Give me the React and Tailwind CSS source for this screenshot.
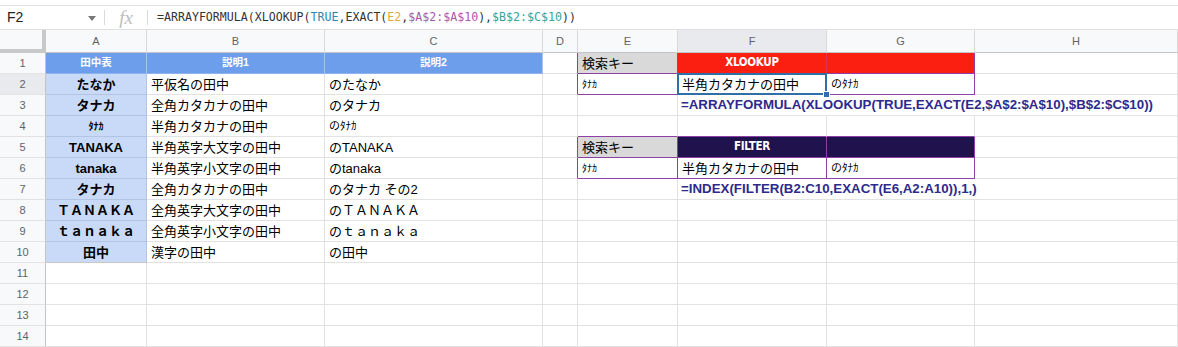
import React from "react";
import { twMerge } from "tailwind-merge";

const GRID = "grid grid-cols-[46px_101px_178px_218px_35px_100px_149px_148px_203px]";
const P = "border-[#8e3fa8]";

function C({ className = "", children }) {
  return (
    <div
      className={twMerge(
        "h-[21px] border-r border-b border-[#e2e2e2] flex items-center px-[4px] whitespace-nowrap text-[13px] text-black leading-none",
        className
      )}
    >
      {children}
    </div>
  );
}

function RH({ n, sel }) {
  return (
    <div
      className={twMerge(
        "h-[21px] border-r border-b border-r-[#c4c4c4] border-b-[#e2e2e2] bg-[#f8f9fa] flex items-center justify-center text-[11px] text-[#5f6368]",
        sel ? "bg-[#e8eaed]" : ""
      )}
    >
      {n}
    </div>
  );
}

const A = "bg-[#c9daf8] font-bold justify-center border-r-[#b3c4e2] border-b-[#b3c4e2]";
const HEAD = "bg-[#6d9eeb] text-white font-bold text-[10.5px] justify-center border-r-[#a9c4f1] border-b-[#8fb3ee]";
const FORMULA = "col-span-3 font-bold text-[13.3px] text-[#2e2a8c] border-r-[#e2e2e2] pl-[3px]";
const COND = "[font-family:'DejaVu_Sans_Condensed','DejaVu_Sans',sans-serif] font-bold text-[11.5px] text-white justify-center tracking-[-0.3px]";

export default function App() {
  return (
    <div className="w-[1178px] h-[347px] overflow-hidden bg-white [font-family:'Liberation_Sans','Noto_Sans_CJK_JP',sans-serif]">
      {/* formula bar */}
      <div className="mt-[5px] h-[25px] border-t border-b border-[#e0e0e0] flex items-center">
        <div className="w-[104px] h-full flex items-center justify-between pl-[7px] pr-[8px]">
          <span className="text-[14px] text-[#222]">F2</span>
          <svg width="8" height="5" viewBox="0 0 8 5" className="mt-[2px]">
            <path d="M0 0 L8 0 L4 5 Z" fill="#777" />
          </svg>
        </div>
        <div className="w-px h-[15px] bg-[#dadada]" />
        <div className="w-[42px] flex items-center justify-center">
          <span className="[font-family:'Liberation_Serif',serif] italic text-[19px] text-[#bdbdbd] leading-none">fx</span>
        </div>
        <div className="w-px h-[15px] bg-[#dadada]" />
        <div className="pl-[9px] [font-family:'DejaVu_Sans_Mono',monospace] text-[11.6px] text-[#333] whitespace-nowrap">
          =ARRAYFORMULA(XLOOKUP(<span className="text-[#2f86b4]">TRUE</span>,EXACT(
          <span className="text-[#e0a74a]">E2</span>,<span className="text-[#a957a8]">$A$2:$A$10</span>),
          <span className="text-[#32a59a]">$B$2:$C$10</span>))
        </div>
      </div>

      {/* column headers */}
      <div className={GRID}>
        <div className="h-[23px] bg-[#f8f9fa] border-r-[4px] border-b-[4px] border-[#c8c8c8]" />
        {["A", "B", "C", "D", "E", "F", "G", "H"].map((l) => (
          <div
            key={l}
            className={twMerge(
              "h-[23px] bg-[#f8f9fa] border-r border-b border-r-[#d9d9d9] border-b-[#c4c4c4] flex items-center justify-center text-[11px] text-[#5f6368]",
              l === "F" ? "bg-[#e8eaed]" : ""
            )}
          >
            {l}
          </div>
        ))}
      </div>

      {/* rows */}
      <div className={GRID}>
        {/* 1 */}
        <RH n={1} />
        <C className={HEAD}>田中表</C>
        <C className={HEAD}>説明1</C>
        <C className={HEAD}>説明2</C>
        <C className={`border-r-[#8e3fa8]`} />
        <C className={`bg-[#d9d9d9] ${P}`}>検索キー</C>
        <C className={`bg-[#fb1f12] ${P} border-r-[#d8345a] ${COND}`}>XLOOKUP</C>
        <C className={`bg-[#fb1f12] ${P}`} />
        <C />

        {/* 2 */}
        <RH n={2} sel />
        <C className={A}>たなか</C>
        <C>平仮名の田中</C>
        <C>のたなか</C>
        <C className="border-r-[#8e3fa8]" />
        <C className={`${P} text-[10px]`}>ﾀﾅｶ</C>
        <C className={`${P} relative overflow-visible`}>
          半角カタカナの田中
          <div className="absolute left-[-1px] top-[-1px] right-[-1px] bottom-[-1px] border-2 border-[#2f6ea6] z-10" />
          <div className="absolute right-[-4px] bottom-[-4px] w-[7px] h-[7px] bg-[#2f6ea6] border border-white z-20" />
        </C>
        <C className={`${P} text-[11px]`}>のﾀﾅｶ</C>
        <C />

        {/* 3 */}
        <RH n={3} />
        <C className={A}>タナカ</C>
        <C>全角カタカナの田中</C>
        <C>のタナカ</C>
        <C />
        <C />
        <C className={FORMULA}>=ARRAYFORMULA(XLOOKUP(TRUE,EXACT(E2,$A$2:$A$10),$B$2:$C$10))</C>

        {/* 4 */}
        <RH n={4} />
        <C className={`${A} text-[10px]`}>ﾀﾅｶ</C>
        <C>半角カタカナの田中</C>
        <C className="text-[11px]">のﾀﾅｶ</C>
        <C />
        <C className="border-b-[#8e3fa8]" />
        <C className="border-b-[#8e3fa8]" />
        <C className="border-b-[#8e3fa8]" />
        <C />

        {/* 5 */}
        <RH n={5} />
        <C className={A}>TANAKA</C>
        <C>半角英字大文字の田中</C>
        <C>のTANAKA</C>
        <C className="border-r-[#8e3fa8]" />
        <C className={`bg-[#d9d9d9] ${P}`}>検索キー</C>
        <C className={`bg-[#20124d] ${P} ${COND}`}>FILTER</C>
        <C className={`bg-[#20124d] ${P}`} />
        <C />

        {/* 6 */}
        <RH n={6} />
        <C className={A}>tanaka</C>
        <C>半角英字小文字の田中</C>
        <C>のtanaka</C>
        <C className="border-r-[#8e3fa8]" />
        <C className={`${P} text-[10px]`}>ﾀﾅｶ</C>
        <C className={P}>半角カタカナの田中</C>
        <C className={`${P} text-[11px]`}>のﾀﾅｶ</C>
        <C />

        {/* 7 */}
        <RH n={7} />
        <C className={A}>タナカ</C>
        <C>全角カタカナの田中</C>
        <C>のタナカ その2</C>
        <C />
        <C />
        <C className={FORMULA}>=INDEX(FILTER(B2:C10,EXACT(E6,A2:A10)),1,)</C>

        {/* 8 */}
        <RH n={8} />
        <C className={A}>ＴＡＮＡＫＡ</C>
        <C>全角英字大文字の田中</C>
        <C>のＴＡＮＡＫＡ</C>
        <C />
        <C />
        <C />
        <C />
        <C />

        {/* 9 */}
        <RH n={9} />
        <C className={A}>ｔａｎａｋａ</C>
        <C>全角英字小文字の田中</C>
        <C>のｔａｎａｋａ</C>
        <C />
        <C />
        <C />
        <C />
        <C />

        {/* 10 */}
        <RH n={10} />
        <C className={`${A} border-b-[#c9c9c9]`}>田中</C>
        <C>漢字の田中</C>
        <C>の田中</C>
        <C />
        <C />
        <C />
        <C />
        <C />

        {[11, 12, 13, 14].map((n) => (
          <React.Fragment key={n}>
            <RH n={n} />
            <C />
            <C />
            <C />
            <C />
            <C />
            <C />
            <C />
            <C />
          </React.Fragment>
        ))}
      </div>
    </div>
  );
}
